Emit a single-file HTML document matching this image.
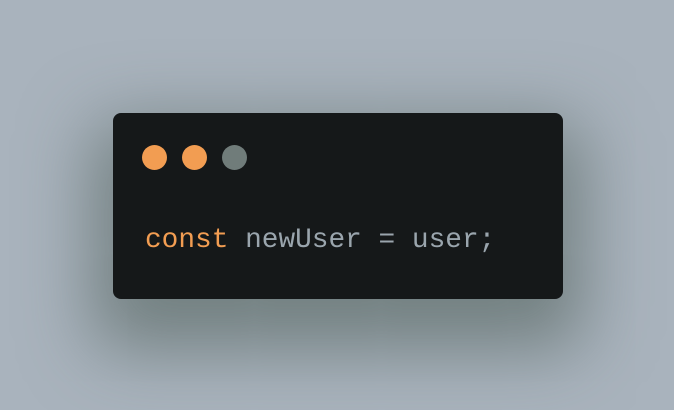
<!DOCTYPE html>
<html><head><style>
html,body{margin:0;padding:0}
body{width:674px;height:410px;overflow:hidden;background:#a9b3bd;position:relative}
.card{position:absolute;left:113px;top:113px;width:450px;height:186px;background:#151819;border-radius:8px;box-shadow:0 30px 70px 20px rgba(85,100,95,0.65)}
.d{position:absolute;top:145px;width:25px;height:25px;border-radius:50%}
.code{position:absolute;left:145px;top:224px;font-family:"Liberation Mono",monospace;font-size:27.8px;color:#9aa5ad;white-space:pre;line-height:34px}
.k{color:#f29d52}
</style></head><body>
<div class="card"></div>
<div class="d" style="left:142px;background:#f29d52"></div>
<div class="d" style="left:182px;background:#f29d52"></div>
<div class="d" style="left:222px;background:#707c7a"></div>
<div class="code"><span class="k">const</span> newUser = user;</div>
</body></html>
